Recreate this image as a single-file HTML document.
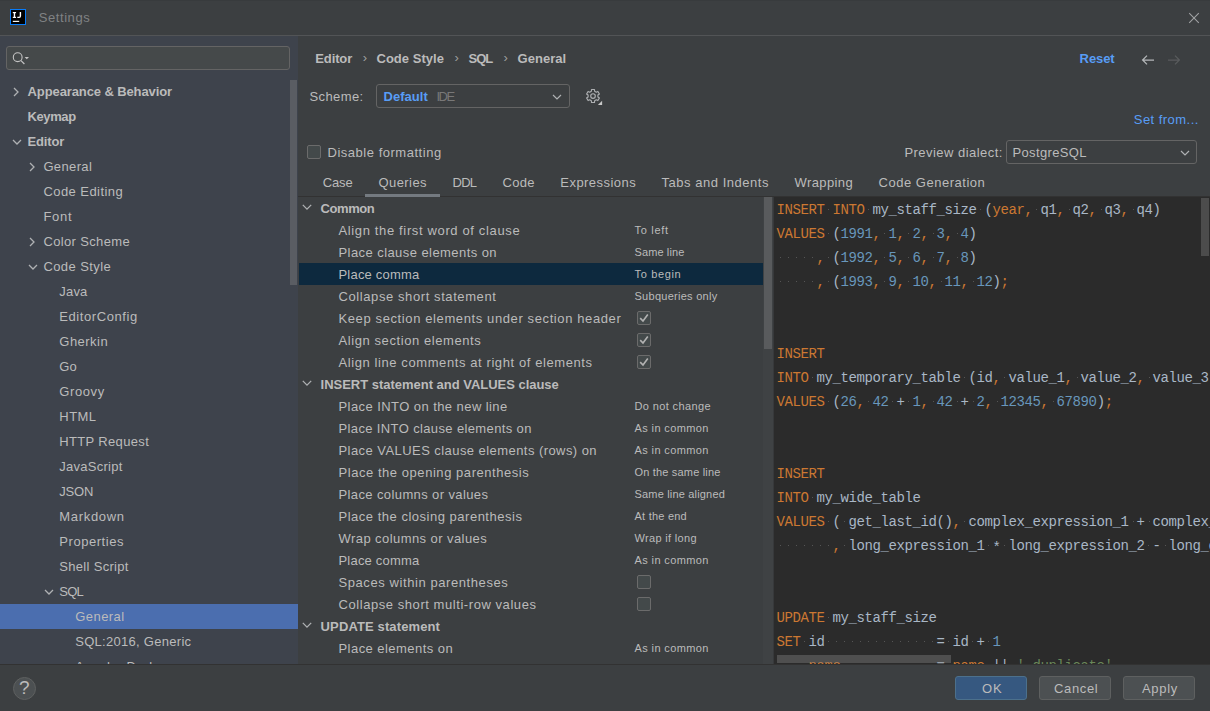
<!DOCTYPE html>
<html><head><meta charset="utf-8"><title>Settings</title>
<style>
*{box-sizing:border-box;margin:0;padding:0}
html,body{width:1210px;height:711px;overflow:hidden;background:#3c3f41}
body{position:relative;font-family:"Liberation Sans",sans-serif;font-size:13px;color:#bbbbbb}
.abs{position:absolute}
.t{position:absolute;white-space:pre;line-height:16px;height:16px}
.b{font-weight:bold}
#titlebar{left:0;top:0;width:1210px;height:35px;background:#3c3f41}
#titleline{left:0;top:35px;width:1210px;height:1px;background:#525456}
#sidebar{left:0;top:36px;width:298px;height:628px;background:#3e434c;overflow:hidden}
#right{left:298px;top:36px;width:912px;height:628px;background:#3c3f41}
#bottom{left:0;top:664px;width:1210px;height:47px;background:#3c3f41}
#clip{left:0;top:0;width:1210px;height:664px;overflow:hidden}
.cb{position:absolute;width:14px;height:14px;border:1px solid #6b6b6b;border-radius:2px;background:#43494a}
.code{position:absolute;left:776.4px;white-space:pre;font-family:"Liberation Mono",monospace;font-size:14px;letter-spacing:-0.4px;line-height:24px;height:24px;padding-top:1px;color:#a9b7c6}
.k{color:#cc7832}.n{color:#6897bb}.s{color:#6a8759}
.w{display:inline-block;width:8px;height:23px;vertical-align:top;background:linear-gradient(#555,#555) 4px 11px/1px 1px no-repeat}
.btn{position:absolute;top:676px;width:72px;height:24px;border-radius:3px;border:1px solid #5e6060;background:#4c5052}
.combo{position:absolute;height:24px;border:1px solid #646464;border-radius:3px;background:#3c3f41}
</style></head><body>
<div id="titlebar" class="abs"></div>
<div id="titleline" class="abs"></div>
<div id="clip" class="abs">
<div id="sidebar" class="abs"></div>
<div id="right" class="abs"></div>

<div class="abs" style="left:10px;top:9px;width:16px;height:16px;background:#000;border:1px solid #087cfa"></div>
<svg class="abs" style="left:10px;top:9px" width="16" height="16" viewBox="0 0 16 16"><g fill="#fff"><rect x="2.8" y="3" width="3.25" height="1.2"/><rect x="3.75" y="3" width="1.4" height="6"/><rect x="2.8" y="7.8" width="3.25" height="1.2"/><rect x="2.8" y="11.8" width="6.4" height="1.15"/></g><path d="M10.4 3 V7.1 Q10.4 8.4 9.1 8.4 H7.3" fill="none" stroke="#fff" stroke-width="1.4"/></svg>
<svg class="abs" style="left:1188px;top:12px" width="12" height="12" viewBox="0 0 12 12"><path d="M1.2 1.2 L10.8 10.8 M10.8 1.2 L1.2 10.8" stroke="#a0a2a4" stroke-width="1.05" fill="none"/></svg>
<div class="abs" style="left:0;top:0;width:1210px;height:1px;background:#383b3d"></div>
<div class="abs" style="left:6px;top:46px;width:284px;height:24px;border:1px solid #646464;border-radius:3px;background:#45494a"></div>
<svg class="abs" style="left:11px;top:50px" width="20" height="16" viewBox="0 0 20 16"><circle cx="6.7" cy="7.2" r="4.4" fill="none" stroke="#c4c4c4" stroke-width="1.1"/><path d="M10 10.6 L13.4 14" stroke="#c4c4c4" stroke-width="1.2"/><path d="M13.6 7 h4.4 l-2.2 2.2z" fill="#c4c4c4"/></svg>
<div class="abs" style="left:0;top:604px;width:298px;height:25px;background:#4b6eaf"></div>
<div class="abs" style="left:290px;top:80px;width:7px;height:205px;background:#5a5d63"></div>
<svg class="abs" style="left:12.3px;top:85.5px" width="8" height="12" viewBox="0 0 8 12"><path d="M2 2 L6 6 L2 10" fill="none" stroke="#afb1b3" stroke-width="1.3"/></svg>
<svg class="abs" style="left:10.6px;top:137.7px" width="12" height="8" viewBox="0 0 12 8"><path d="M2 2 L6 6 L10 2" fill="none" stroke="#afb1b3" stroke-width="1.3"/></svg>
<svg class="abs" style="left:28.3px;top:160.5px" width="8" height="12" viewBox="0 0 8 12"><path d="M2 2 L6 6 L2 10" fill="none" stroke="#afb1b3" stroke-width="1.3"/></svg>
<svg class="abs" style="left:28.3px;top:235.5px" width="8" height="12" viewBox="0 0 8 12"><path d="M2 2 L6 6 L2 10" fill="none" stroke="#afb1b3" stroke-width="1.3"/></svg>
<svg class="abs" style="left:26.6px;top:262.7px" width="12" height="8" viewBox="0 0 12 8"><path d="M2 2 L6 6 L10 2" fill="none" stroke="#afb1b3" stroke-width="1.3"/></svg>
<svg class="abs" style="left:42.6px;top:587.7px" width="12" height="8" viewBox="0 0 12 8"><path d="M2 2 L6 6 L10 2" fill="none" stroke="#afb1b3" stroke-width="1.3"/></svg>
<div class="cb" style="left:307px;top:145px"></div>
<div class="abs" style="left:299px;top:263px;width:464px;height:22px;background:#0d293e"></div>
<div class="abs" style="left:298px;top:196px;width:912px;height:1px;background:#323232"></div>
<div class="abs" style="left:365px;top:194px;width:75px;height:3px;background:#747a80"></div>
<div class="abs" style="left:763px;top:197px;width:10px;height:467px;background:#3f4244"></div>
<div class="abs" style="left:773px;top:197px;width:1px;height:467px;background:#37393b"></div>
<div class="abs" style="left:764px;top:197px;width:8px;height:152px;background:#595b5d"></div>
<div class="abs" style="left:774px;top:197px;width:436px;height:467px;background:#2b2b2b;overflow:hidden"></div>
<div class="abs" style="left:1201px;top:198px;width:8px;height:58px;background:#4c4c4c"></div>
<svg class="abs" style="left:300.7px;top:203.3px" width="12" height="8" viewBox="0 0 12 8"><path d="M1.8 1.9 L6 6.1 L10.2 1.9" fill="none" stroke="#afb1b3" stroke-width="1.3"/></svg>
<div class="cb" style="left:637px;top:311px"></div>
<svg class="abs" style="left:637px;top:311px" width="14" height="14" viewBox="0 0 14 14"><path d="M3.2 7.2 L6 10 L10.8 3.6" fill="none" stroke="#b2b2b2" stroke-width="1.65"/></svg>
<div class="cb" style="left:637px;top:333px"></div>
<svg class="abs" style="left:637px;top:333px" width="14" height="14" viewBox="0 0 14 14"><path d="M3.2 7.2 L6 10 L10.8 3.6" fill="none" stroke="#b2b2b2" stroke-width="1.65"/></svg>
<div class="cb" style="left:637px;top:355px"></div>
<svg class="abs" style="left:637px;top:355px" width="14" height="14" viewBox="0 0 14 14"><path d="M3.2 7.2 L6 10 L10.8 3.6" fill="none" stroke="#b2b2b2" stroke-width="1.65"/></svg>
<svg class="abs" style="left:300.7px;top:379.3px" width="12" height="8" viewBox="0 0 12 8"><path d="M1.8 1.9 L6 6.1 L10.2 1.9" fill="none" stroke="#afb1b3" stroke-width="1.3"/></svg>
<div class="cb" style="left:637px;top:575px"></div>
<div class="cb" style="left:637px;top:597px"></div>
<svg class="abs" style="left:300.7px;top:621.3px" width="12" height="8" viewBox="0 0 12 8"><path d="M1.8 1.9 L6 6.1 L10.2 1.9" fill="none" stroke="#afb1b3" stroke-width="1.3"/></svg>
<div class="code" style="top:197px"><span class="k">INSERT<span class="w"></span>INTO</span><span class="w"></span>my_staff_size<span class="w"></span>(<span class="k">year,</span><span class="w"></span>q1<span class="k">,</span><span class="w"></span>q2<span class="k">,</span><span class="w"></span>q3<span class="k">,</span><span class="w"></span>q4)</div>
<div class="code" style="top:221px"><span class="k">VALUES</span><span class="w"></span>(<span class="n">1991</span><span class="k">,</span><span class="w"></span><span class="n">1</span><span class="k">,</span><span class="w"></span><span class="n">2</span><span class="k">,</span><span class="w"></span><span class="n">3</span><span class="k">,</span><span class="w"></span><span class="n">4</span>)</div>
<div class="code" style="top:245px"><span class="w"></span><span class="w"></span><span class="w"></span><span class="w"></span><span class="w"></span><span class="k">,</span><span class="w"></span>(<span class="n">1992</span><span class="k">,</span><span class="w"></span><span class="n">5</span><span class="k">,</span><span class="w"></span><span class="n">6</span><span class="k">,</span><span class="w"></span><span class="n">7</span><span class="k">,</span><span class="w"></span><span class="n">8</span>)</div>
<div class="code" style="top:269px"><span class="w"></span><span class="w"></span><span class="w"></span><span class="w"></span><span class="w"></span><span class="k">,</span><span class="w"></span>(<span class="n">1993</span><span class="k">,</span><span class="w"></span><span class="n">9</span><span class="k">,</span><span class="w"></span><span class="n">10</span><span class="k">,</span><span class="w"></span><span class="n">11</span><span class="k">,</span><span class="w"></span><span class="n">12</span>)<span class="k">;</span></div>
<div class="code" style="top:341px"><span class="k">INSERT</span></div>
<div class="code" style="top:365px"><span class="k">INTO</span><span class="w"></span>my_temporary_table<span class="w"></span>(id<span class="k">,</span><span class="w"></span>value_1<span class="k">,</span><span class="w"></span>value_2<span class="k">,</span><span class="w"></span>value_3<span class="k">,</span><span class="w"></span>value_4)</div>
<div class="code" style="top:389px"><span class="k">VALUES</span><span class="w"></span>(<span class="n">26</span><span class="k">,</span><span class="w"></span><span class="n">42</span><span class="w"></span>+<span class="w"></span><span class="n">1</span><span class="k">,</span><span class="w"></span><span class="n">42</span><span class="w"></span>+<span class="w"></span><span class="n">2</span><span class="k">,</span><span class="w"></span><span class="n">12345</span><span class="k">,</span><span class="w"></span><span class="n">67890</span>)<span class="k">;</span></div>
<div class="code" style="top:461px"><span class="k">INSERT</span></div>
<div class="code" style="top:485px"><span class="k">INTO</span><span class="w"></span>my_wide_table</div>
<div class="code" style="top:509px"><span class="k">VALUES</span><span class="w"></span>(<span class="w"></span>get_last_id()<span class="k">,</span><span class="w"></span>complex_expression_1<span class="w"></span>+<span class="w"></span>complex_expression_2</div>
<div class="code" style="top:533px"><span class="w"></span><span class="w"></span><span class="w"></span><span class="w"></span><span class="w"></span><span class="w"></span><span class="w"></span><span class="k">,</span><span class="w"></span>long_expression_1<span class="w"></span><span style="position:relative;top:2px">*</span><span class="w"></span>long_expression_2<span class="w"></span>-<span class="w"></span>long_expression_3</div>
<div class="code" style="top:605px"><span class="k">UPDATE</span><span class="w"></span>my_staff_size</div>
<div class="code" style="top:629px"><span class="k">SET</span><span class="w"></span>id<span class="w"></span><span class="w"></span><span class="w"></span><span class="w"></span><span class="w"></span><span class="w"></span><span class="w"></span><span class="w"></span><span class="w"></span><span class="w"></span><span class="w"></span><span class="w"></span><span class="w"></span><span class="w"></span>=<span class="w"></span>id<span class="w"></span>+<span class="w"></span><span class="n">1</span></div>
<div class="code" style="top:653px"><span class="w"></span><span class="w"></span><span class="k">,<span class="w"></span>name</span><span class="w"></span><span class="w"></span><span class="w"></span><span class="w"></span><span class="w"></span><span class="w"></span><span class="w"></span><span class="w"></span><span class="w"></span><span class="w"></span><span class="w"></span><span class="w"></span>=<span class="w"></span><span class="k">name</span><span class="w"></span>||<span class="w"></span><span class="s">'<span class="w"></span>duplicate'</span></div>
<div class="abs" style="left:777px;top:655px;width:174px;height:8px;background:rgba(128,128,128,0.42)"></div>
<div class="t b" style="left:27.6px;top:83.8px;letter-spacing:-0.11px;">Appearance &amp; Behavior</div>
<div class="t b" style="left:27.6px;top:108.8px;letter-spacing:-0.42px;">Keymap</div>
<div class="t b" style="left:27.6px;top:133.8px;letter-spacing:-0.19px;">Editor</div>
<div class="t" style="left:43.4px;top:158.8px;letter-spacing:0.37px;">General</div>
<div class="t" style="left:43.4px;top:183.8px;letter-spacing:0.44px;">Code Editing</div>
<div class="t" style="left:43.4px;top:208.8px;letter-spacing:0.76px;">Font</div>
<div class="t" style="left:43.4px;top:233.8px;letter-spacing:0.36px;">Color Scheme</div>
<div class="t" style="left:43.4px;top:258.8px;letter-spacing:0.42px;">Code Style</div>
<div class="t" style="left:59.3px;top:283.8px;letter-spacing:0.18px;">Java</div>
<div class="t" style="left:59.3px;top:308.8px;letter-spacing:0.58px;">EditorConfig</div>
<div class="t" style="left:59.3px;top:333.8px;letter-spacing:0.48px;">Gherkin</div>
<div class="t" style="left:59.3px;top:358.8px;letter-spacing:0.06px;">Go</div>
<div class="t" style="left:59.3px;top:383.8px;letter-spacing:0.60px;">Groovy</div>
<div class="t" style="left:59.3px;top:408.8px;letter-spacing:0.47px;">HTML</div>
<div class="t" style="left:59.3px;top:433.8px;letter-spacing:0.34px;">HTTP Request</div>
<div class="t" style="left:59.3px;top:458.8px;letter-spacing:0.26px;">JavaScript</div>
<div class="t" style="left:59.3px;top:483.8px;letter-spacing:-0.22px;">JSON</div>
<div class="t" style="left:59.3px;top:508.8px;letter-spacing:0.69px;">Markdown</div>
<div class="t" style="left:59.3px;top:533.8px;letter-spacing:0.54px;">Properties</div>
<div class="t" style="left:59.3px;top:558.8px;letter-spacing:0.31px;">Shell Script</div>
<div class="t" style="left:59.3px;top:583.8px;letter-spacing:-0.81px;">SQL</div>
<div class="t" style="left:75.2px;top:608.8px;letter-spacing:0.46px;">General</div>
<div class="t" style="left:75.2px;top:633.8px;letter-spacing:0.29px;">SQL:2016, Generic</div>
<div class="t" style="left:75.2px;top:658.8px;letter-spacing:0.53px;">Apache Derby</div>
<div class="t" style="left:38.8px;top:9.6px;color:#808284;letter-spacing:0.56px;">Settings</div>
<div class="t b" style="left:315.3px;top:50.5px;letter-spacing:-0.13px;">Editor</div>
<div class="t" style="left:362.8px;top:49.9px;color:#9c9e9f;">›</div>
<div class="t b" style="left:376.5px;top:50.5px;letter-spacing:0.02px;">Code Style</div>
<div class="t" style="left:454.5px;top:49.9px;color:#9c9e9f;">›</div>
<div class="t b" style="left:468.5px;top:50.5px;letter-spacing:-1.02px;">SQL</div>
<div class="t" style="left:503.5px;top:49.9px;color:#9c9e9f;">›</div>
<div class="t b" style="left:517.5px;top:50.5px;letter-spacing:0.05px;">General</div>
<div class="t b" style="left:1079.6px;top:51.0px;color:#589df6;letter-spacing:-0.08px;">Reset</div>
<div class="t" style="left:309.5px;top:88.5px;letter-spacing:0.40px;">Scheme:</div>
<div class="t b" style="left:383.6px;top:88.5px;color:#589df6;letter-spacing:0.01px;">Default</div>
<div class="t" style="left:436.5px;top:88.5px;color:#787878;letter-spacing:-1.49px;">IDE</div>
<div class="t" style="left:1133.8px;top:112.0px;color:#589df6;letter-spacing:0.46px;">Set from...</div>
<div class="t" style="left:327.5px;top:144.8px;letter-spacing:0.52px;">Disable formatting</div>
<div class="t" style="left:904.4px;top:144.6px;letter-spacing:0.47px;">Preview dialect:</div>
<div class="t" style="left:1012.5px;top:144.6px;letter-spacing:0.35px;">PostgreSQL</div>
<div class="t" style="left:322.7px;top:175.1px;letter-spacing:-0.12px;">Case</div>
<div class="t" style="left:378.5px;top:175.1px;letter-spacing:0.43px;">Queries</div>
<div class="t" style="left:452.5px;top:175.1px;letter-spacing:-0.71px;">DDL</div>
<div class="t" style="left:502.5px;top:175.1px;letter-spacing:0.31px;">Code</div>
<div class="t" style="left:560.3px;top:175.1px;letter-spacing:0.46px;">Expressions</div>
<div class="t" style="left:661.6px;top:175.1px;letter-spacing:0.52px;">Tabs and Indents</div>
<div class="t" style="left:794.6px;top:175.1px;letter-spacing:0.38px;">Wrapping</div>
<div class="t" style="left:878.6px;top:175.1px;letter-spacing:0.51px;">Code Generation</div>
<div class="t b" style="left:320.6px;top:200.6px;letter-spacing:-0.43px;">Common</div>
<div class="t" style="left:338.5px;top:222.6px;letter-spacing:0.64px;">Align the first word of clause</div>
<div class="t" style="left:634.5px;top:222.4px;font-size:11px;letter-spacing:0.69px;">To left</div>
<div class="t" style="left:338.5px;top:244.6px;letter-spacing:0.43px;">Place clause elements on</div>
<div class="t" style="left:634.5px;top:244.4px;font-size:11px;letter-spacing:0.11px;">Same line</div>
<div class="t" style="left:338.5px;top:266.6px;letter-spacing:0.20px;">Place comma</div>
<div class="t" style="left:634.5px;top:266.4px;font-size:11px;letter-spacing:0.66px;">To begin</div>
<div class="t" style="left:338.5px;top:288.6px;letter-spacing:0.59px;">Collapse short statement</div>
<div class="t" style="left:634.5px;top:288.4px;font-size:11px;letter-spacing:0.27px;">Subqueries only</div>
<div class="t" style="left:338.5px;top:310.6px;letter-spacing:0.61px;">Keep section elements under section header</div>
<div class="t" style="left:338.5px;top:332.6px;letter-spacing:0.58px;">Align section elements</div>
<div class="t" style="left:338.5px;top:354.6px;letter-spacing:0.59px;">Align line comments at right of elements</div>
<div class="t b" style="left:320.6px;top:376.6px;letter-spacing:-0.02px;">INSERT statement and VALUES clause</div>
<div class="t" style="left:338.5px;top:398.6px;letter-spacing:0.43px;">Place INTO on the new line</div>
<div class="t" style="left:634.5px;top:398.4px;font-size:11px;letter-spacing:0.37px;">Do not change</div>
<div class="t" style="left:338.5px;top:420.6px;letter-spacing:0.37px;">Place INTO clause elements on</div>
<div class="t" style="left:634.5px;top:420.4px;font-size:11px;letter-spacing:0.39px;">As in common</div>
<div class="t" style="left:338.5px;top:442.6px;letter-spacing:0.44px;">Place VALUES clause elements (rows) on</div>
<div class="t" style="left:634.5px;top:442.4px;font-size:11px;letter-spacing:0.39px;">As in common</div>
<div class="t" style="left:338.5px;top:464.6px;letter-spacing:0.55px;">Place the opening parenthesis</div>
<div class="t" style="left:634.5px;top:464.4px;font-size:11px;letter-spacing:0.18px;">On the same line</div>
<div class="t" style="left:338.5px;top:486.6px;letter-spacing:0.39px;">Place columns or values</div>
<div class="t" style="left:634.5px;top:486.4px;font-size:11px;letter-spacing:0.18px;">Same line aligned</div>
<div class="t" style="left:338.5px;top:508.5px;letter-spacing:0.51px;">Place the closing parenthesis</div>
<div class="t" style="left:634.5px;top:508.3px;font-size:11px;letter-spacing:0.23px;">At the end</div>
<div class="t" style="left:338.5px;top:530.5px;letter-spacing:0.43px;">Wrap columns or values</div>
<div class="t" style="left:634.5px;top:530.3px;font-size:11px;letter-spacing:0.33px;">Wrap if long</div>
<div class="t" style="left:338.5px;top:552.5px;letter-spacing:0.20px;">Place comma</div>
<div class="t" style="left:634.5px;top:552.3px;font-size:11px;letter-spacing:0.39px;">As in common</div>
<div class="t" style="left:338.5px;top:574.5px;letter-spacing:0.58px;">Spaces within parentheses</div>
<div class="t" style="left:338.5px;top:596.5px;letter-spacing:0.56px;">Collapse short multi-row values</div>
<div class="t b" style="left:320.6px;top:618.5px;letter-spacing:0.12px;">UPDATE statement</div>
<div class="t" style="left:338.5px;top:640.5px;letter-spacing:0.45px;">Place elements on</div>
<div class="t" style="left:634.5px;top:640.3px;font-size:11px;letter-spacing:0.39px;">As in common</div>
</div>
<div id="bottom" class="abs"></div>
<div class="abs" style="left:0;top:664px;width:1210px;height:1px;background:#323232"></div>
<div class="abs" style="left:13px;top:677px;width:23px;height:23px;border-radius:50%;background:#4c5052;border:1px solid #5e6060"></div>
<div class="btn" style="left:955px;background:#365880;border-color:#4c708c"></div>
<div class="btn" style="left:1039px"></div>
<div class="btn" style="left:1123px"></div>
<div class="t" style="left:982.0px;top:680.5px;letter-spacing:0.90px;">OK</div>
<div class="t" style="left:1054.0px;top:680.5px;letter-spacing:0.65px;">Cancel</div>
<div class="t" style="left:1142.0px;top:680.5px;letter-spacing:0.67px;">Apply</div>
<div class="t" style="left:18.9px;top:680.2px;font-size:19px;">?</div>
<div class="combo" style="left:376px;top:84px;width:194px"></div>
<svg class="abs" style="left:551.0px;top:92.5px" width="12" height="8" viewBox="0 0 12 8"><path d="M2 2 L6 6 L10 2" fill="none" stroke="#afb1b3" stroke-width="1.2"/></svg>
<div class="combo" style="left:1006px;top:140px;width:191px"></div>
<svg class="abs" style="left:1179.0px;top:148.5px" width="12" height="8" viewBox="0 0 12 8"><path d="M2 2 L6 6 L10 2" fill="none" stroke="#afb1b3" stroke-width="1.2"/></svg>
<div class="t b" style="left:383.6px;top:88.5px;color:#589df6;letter-spacing:0.01px;">Default</div>
<div class="t" style="left:436.5px;top:88.5px;color:#787878;letter-spacing:-1.49px;">IDE</div>
<div class="t" style="left:1012.5px;top:144.6px;letter-spacing:0.35px;">PostgreSQL</div>
<svg class="abs" style="left:584.1px;top:87px" width="20" height="20" viewBox="0 0 20 20"><g fill="none" stroke="#adafb1" stroke-width="1.15" stroke-linejoin="round"><path d="M10.51 2.47 L7.49 2.47 L7.37 4.27 L5.72 5.23 L4.10 4.43 L2.59 7.04 L4.09 8.05 L4.09 9.95 L2.59 10.96 L4.10 13.57 L5.72 12.77 L7.37 13.73 L7.49 15.53 L10.51 15.53 L10.63 13.73 L12.28 12.77 L13.90 13.57 L15.41 10.96 L13.91 9.95 L13.91 8.05 L15.41 7.04 L13.90 4.43 L12.28 5.23 L10.63 4.27Z"/><circle cx="9" cy="9" r="2.3"/></g><path d="M18.1 13.7 v4.2 h-4.2z" fill="#c8c8c8"/></svg>
<svg class="abs" style="left:1141px;top:53px" width="14" height="14" viewBox="0 0 14 14"><path d="M13 7 H1.8 M6 2.6 L1.6 7 L6 11.4" fill="none" stroke="#b4b7b9" stroke-width="1.25"/></svg>
<svg class="abs" style="left:1167px;top:53px" width="14" height="14" viewBox="0 0 14 14"><path d="M1 7 H12.2 M8 2.6 L12.4 7 L8 11.4" fill="none" stroke="#595b5d" stroke-width="1.25"/></svg>
</body></html>
